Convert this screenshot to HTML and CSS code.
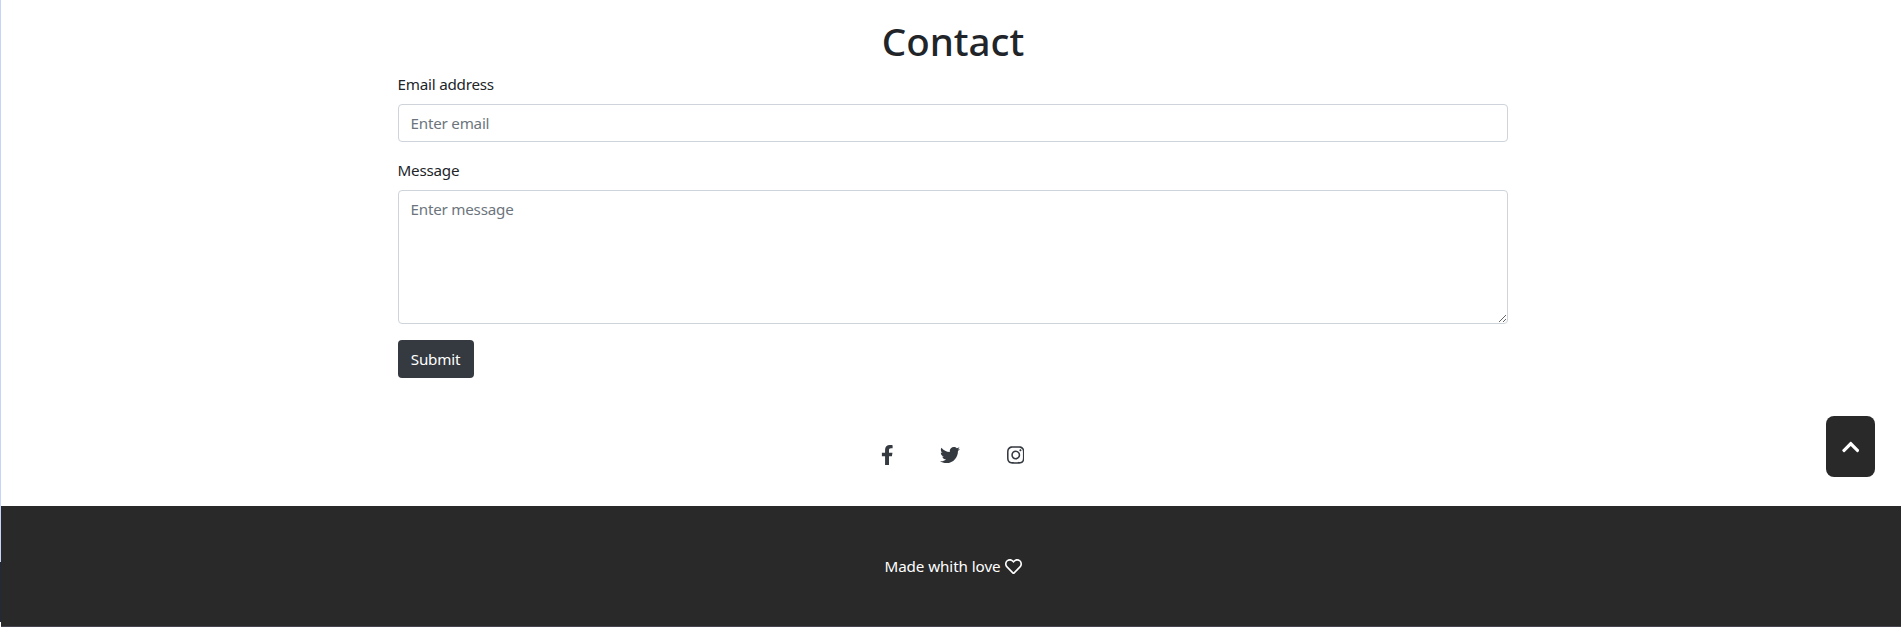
FILE: index.html
```html
<!DOCTYPE html>
<html lang="en">
<head>
<meta charset="utf-8">
<title>Contact</title>
<link rel="stylesheet" href="styles.css">
</head>
<body>
<div class="edge"><span class="edge-light"></span><span class="edge-dark"></span></div>
<div class="page">
  <main class="contact">
    <h1 class="title">Contact</h1>
    <form class="form">
      <label class="label" for="email">Email address</label>
      <input class="field" id="email" type="email" placeholder="Enter email">
      <label class="label" for="message">Message</label>
      <textarea class="field area" id="message" placeholder="Enter message"></textarea>
      <button class="submit" type="button">Submit</button>
    </form>
    <nav class="social">
      <svg class="fb" viewBox="0 0 320 512"><path d="M279.14 288l14.22-92.66h-88.91v-60.13c0-25.35 12.42-50.06 52.24-50.06h40.42V6.26S260.43 0 225.36 0c-73.22 0-121.08 44.38-121.08 124.72v70.62H22.89V288h81.39v224h100.17V288z"/></svg>
      <svg class="tw" viewBox="0 0 512 512"><path d="M459.37 151.716c.325 4.548.325 9.097.325 13.645 0 138.72-105.583 298.558-298.558 298.558-59.452 0-114.68-17.219-161.137-47.106 8.447.974 16.568 1.299 25.34 1.299 49.055 0 94.213-16.568 130.274-44.832-46.132-.975-84.792-31.188-98.112-72.772 6.498.974 12.995 1.624 19.818 1.624 9.421 0 18.843-1.3 27.614-3.573-48.081-9.747-84.143-51.98-84.143-102.985v-1.299c13.969 7.797 30.214 12.67 47.431 13.319-28.264-18.843-46.781-51.005-46.781-87.391 0-19.492 5.197-37.36 14.294-52.954 51.655 63.675 129.3 105.258 216.365 109.807-1.624-7.797-2.599-15.918-2.599-24.04 0-57.828 46.782-104.934 104.934-104.934 30.213 0 57.502 12.67 76.67 33.137 23.715-4.548 46.456-13.32 66.599-25.34-7.798 24.366-24.366 44.833-46.132 57.827 21.117-2.273 41.584-8.122 60.426-16.243-14.292 20.791-32.161 39.308-52.628 54.253z"/></svg>
      <svg class="ig" viewBox="0 0 448 512"><path d="M224.1 141c-63.6 0-114.9 51.3-114.9 114.9s51.3 114.9 114.9 114.9S339 319.5 339 255.900 287.700 141 224.100 141zm0 189.600c-41.100 0-74.700-33.500-74.700-74.700s33.500-74.700 74.700-74.700 74.700 33.500 74.700 74.700-33.600 74.700-74.700 74.700zm146.400-194.300c0 14.900-12 26.800-26.800 26.800-14.900 0-26.800-12-26.800-26.800s12-26.800 26.800-26.800 26.800 12 26.800 26.800zm76.100 27.200c-1.700-35.900-9.900-67.700-36.200-93.900-26.200-26.200-58-34.400-93.900-36.200-37-2.100-147.900-2.100-184.900 0-35.800 1.700-67.600 9.900-93.900 36.100s-34.400 58-36.200 93.900c-2.100 37-2.100 147.900 0 184.900 1.700 35.900 9.900 67.700 36.200 93.900s58 34.400 93.900 36.200c37 2.100 147.900 2.100 184.900 0 35.900-1.700 67.700-9.900 93.900-36.200 26.200-26.200 34.400-58 36.200-93.900 2.100-37 2.100-147.800 0-184.800zM398.800 388c-7.800 19.600-22.900 34.700-42.600 42.600-29.500 11.700-99.500 9-132.100 9s-102.700 2.600-132.100-9c-19.600-7.800-34.700-22.900-42.600-42.600-11.700-29.500-9-99.500-9-132.100s-2.600-102.700 9-132.100c7.800-19.600 22.900-34.700 42.600-42.600 29.500-11.700 99.500-9 132.100-9s102.700-2.600 132.100 9c19.600 7.800 34.700 22.900 42.600 42.600 11.700 29.500 9 99.500 9 132.100s2.700 102.700-9 132.100z"/></svg>
    </nav>
  </main>
  <footer class="footer">
    <span class="love">Made whith love</span>
    <svg class="heart" viewBox="0 0 512 512"><path d="M458.400 64.300C400.600 15.700 311.300 23 256 79.300 200.700 23 111.400 15.600 53.600 64.300-21.600 127.600-10.600 230.800 43 285.500l175.400 178.700c10 10.200 23.400 15.900 37.600 15.900 14.300 0 27.600-5.600 37.600-15.800L469 285.600c53.500-54.700 64.700-157.900-10.600-221.300zm-23.600 187.500L259.400 430.500c-2.400 2.400-4.400 2.400-6.800 0L77.200 251.800c-36.500-37.200-43.900-107.600 7.300-150.700 38.900-32.700 98.900-27.800 136.500 10.500l35 35.700 35-35.700c37.800-38.500 97.800-43.200 136.500-10.600 51.100 43.100 43.500 113.900 7.300 150.800z"/></svg>
  </footer>
</div>
<a class="to-top"><svg viewBox="0 0 448 512"><path d="M240.971 130.524l194.343 194.343c9.373 9.373 9.373 24.569 0 33.941l-22.667 22.667c-9.357 9.357-24.522 9.375-33.901.04L224 227.495 69.255 381.516c-9.379 9.335-24.544 9.317-33.901-.04l-22.667-22.667c-9.373-9.373-9.373-24.569 0-33.941L207.030 130.525c9.372-9.373 24.568-9.373 33.941-.001z"/></svg></a>
</body>
</html>
```
FILE: styles.css
```css
* { box-sizing: border-box; }

body {
  margin: 0;
  display: flex;
  height: 627px;
  overflow: hidden;
  background: #fff;
  color: #212529;
  font: 15.2px/24px "Noto Sans", "Open Sans", sans-serif;
  letter-spacing: -0.22px;
}

.edge { display: flex; flex-direction: column; flex: 0 0 1px; }
.edge-light { height: 562px; background: #c6d5f7; }
.edge-dark { height: 60px; background: #202a3c; }

.page { flex: 1; display: flex; flex-direction: column; }

.contact {
  height: 506px;
  padding: 17px 393px 0 397px;
}

.title {
  margin: 0 0 7px;
  font-size: 38.5px;
  line-height: 48px;
  font-weight: 500;
  letter-spacing: 0;
  text-align: center;
}

.form { display: flex; flex-direction: column; align-items: flex-start; }
.label { margin: 0 0 8px -0.5px; }

.field {
  width: 100%;
  height: 38px;
  margin: 0 0 16px;
  padding: 6px 11.5px;
  border: 1px solid #ced4da;
  border-radius: 4px;
  background: #fff;
  font: inherit;
  letter-spacing: inherit;
}
.field::placeholder { color: #6c757d; opacity: 1; }
.area { height: 134px; resize: vertical; }

.submit {
  width: 76px;
  height: 38px;
  padding: 0 1px 0 0;
  border: 0;
  border-radius: 4px;
  background: #343a40;
  color: #fff;
  font: inherit;
  letter-spacing: inherit;
}

.social {
  display: flex;
  padding: 66.5px 0 0 483px;
  fill: #343a40;
}
.social svg { height: 20px; }
.fb { width: 12.5px; margin-right: 46.5px; }
.tw { width: 20px; margin-right: 46.5px; }
.ig { width: 17.5px; }

.footer {
  height: 121px;
  display: flex;
  justify-content: center;
  align-items: center;
  gap: 4px;
  padding-left: 4px;
  border-bottom: 1px solid #454550;
  background: #292929;
  color: #fff;
}
.love { letter-spacing: -0.08px; }
.heart { width: 17px; height: 17px; fill: #fff; }

.to-top {
  position: fixed;
  top: 416px;
  right: 26px;
  width: 49px;
  height: 61px;
  display: flex;
  align-items: center;
  justify-content: center;
  border-radius: 8px;
  background: #292929;
}
.to-top svg { width: 17.5px; height: 20px; fill: #fff; }
```
